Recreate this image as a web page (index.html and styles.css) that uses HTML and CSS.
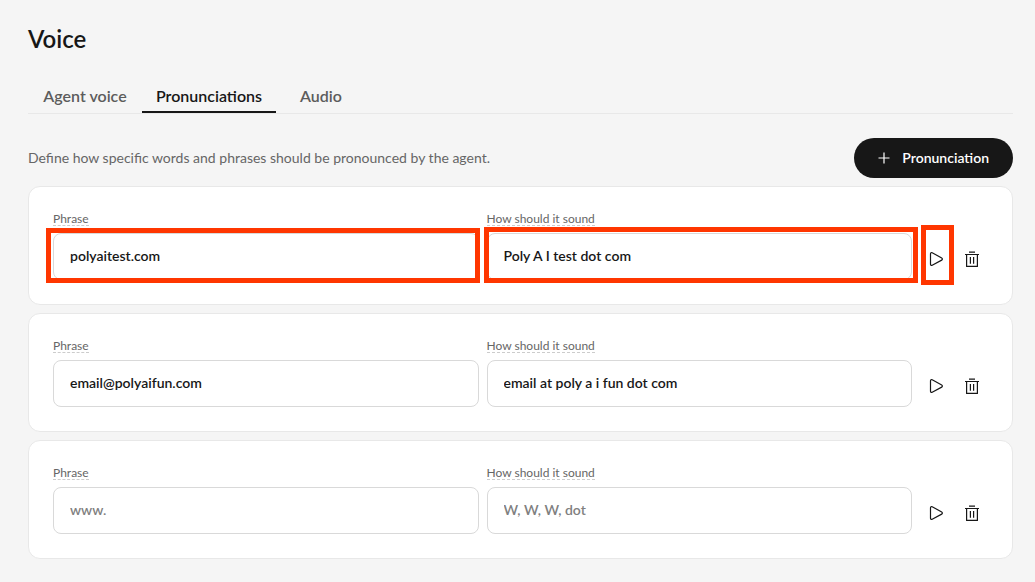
FILE: index.html
```html
<!DOCTYPE html>
<html lang="en">
<head>
<meta charset="utf-8">
<title>Voice</title>
<link rel="stylesheet" href="styles.css">
</head>
<body>
<svg class="sprite" aria-hidden="true">
  <symbol id="play" viewBox="0 0 16 16"><path d="M2.500 2.800v10.400c0 1 .8 1.500 1.700 1.100l9.500-5.200c.9-.5.9-1.600 0-2.100L4.200 1.700c-.9-.4-1.700.1-1.700 1.100z" fill="none" stroke="currentColor" stroke-width="1.200" stroke-linejoin="round"/></symbol>
  <symbol id="trash" viewBox="0 0 16 16"><path d="M1 3.500h14M5 1.100h6M2.600 3.500v11.900h10.800V3.500M6.400 6v6.800M9.600 6v6.800" fill="none" stroke="currentColor" stroke-width="1.200" stroke-linejoin="round"/></symbol>
</svg>
<main class="page">
  <h1 class="title">Voice</h1>
  <nav class="tabs">
    <a class="tab tab-agent" href="#agent">Agent voice</a>
    <a class="tab tab-pronunciations active" href="#pronunciations" aria-current="page">Pronunciations</a>
    <a class="tab tab-audio" href="#audio">Audio</a>
  </nav>
  <div class="intro">
    <p class="description">Define how specific words and phrases should be pronounced by the agent.</p>
    <button class="add" type="button"><svg class="plus" viewBox="0 0 12 12" aria-hidden="true"><path d="M6 .5v11M.5 6h11" stroke="currentColor" stroke-width="1.200"/></svg>Pronunciation</button>
  </div>
  <div class="cards">
    <section class="card">
      <div class="field">
        <label class="label" for="phrase1">Phrase</label>
        <div class="control marked mark-phrase"><input class="input" id="phrase1" type="text" value="polyaitest.com" placeholder="www."></div>
      </div>
      <div class="field">
        <label class="label" for="sound1">How should it sound</label>
        <div class="control marked mark-sound"><input class="input" id="sound1" type="text" value="Poly A I test dot com" placeholder="W, W, W, dot"></div>
      </div>
      <div class="actions">
        <button class="action marked mark-play" type="button" aria-label="Play"><svg class="icon"><use href="#play"/></svg></button>
        <button class="action" type="button" aria-label="Delete"><svg class="icon"><use href="#trash"/></svg></button>
      </div>
    </section>
    <section class="card">
      <div class="field">
        <label class="label" for="phrase2">Phrase</label>
        <div class="control"><input class="input" id="phrase2" type="text" value="email@polyaifun.com" placeholder="www."></div>
      </div>
      <div class="field">
        <label class="label" for="sound2">How should it sound</label>
        <div class="control"><input class="input" id="sound2" type="text" value="email at poly a i fun dot com" placeholder="W, W, W, dot"></div>
      </div>
      <div class="actions">
        <button class="action" type="button" aria-label="Play"><svg class="icon"><use href="#play"/></svg></button>
        <button class="action" type="button" aria-label="Delete"><svg class="icon"><use href="#trash"/></svg></button>
      </div>
    </section>
    <section class="card">
      <div class="field">
        <label class="label" for="phrase3">Phrase</label>
        <div class="control"><input class="input" id="phrase3" type="text" placeholder="www."></div>
      </div>
      <div class="field">
        <label class="label" for="sound3">How should it sound</label>
        <div class="control"><input class="input" id="sound3" type="text" placeholder="W, W, W, dot"></div>
      </div>
      <div class="actions">
        <button class="action" type="button" aria-label="Play"><svg class="icon"><use href="#play"/></svg></button>
        <button class="action" type="button" aria-label="Delete"><svg class="icon"><use href="#trash"/></svg></button>
      </div>
    </section>
  </div>
</main>
</body>
</html>
```
FILE: styles.css
```css
* { box-sizing: border-box; }
body {
  margin: 0;
  background: #f5f5f5;
  color: #171717;
  font-family: Lato, "Open Sans", sans-serif;
  font-size: 14px;
}
input, button { font: inherit; color: inherit; }
.sprite { position: absolute; width: 0; height: 0; }
.page { padding: 24px 22px 23px 28px; }
.title { margin: 0; font-size: 24px; line-height: 30px; font-weight: 600; }
.tabs { display: flex; margin-top: 26px; border-bottom: 1px solid #e8e8e8; }
.tab {
  height: 33px;
  border-bottom: 2px solid transparent;
  color: #5c5c5c;
  font-size: 16px;
  line-height: 32px;
  font-weight: 600;
  text-align: center;
  text-decoration: none;
}
.tab.active { color: #171717; border-color: #171717; }
.tab-agent { min-width: 114px; }
.tab-pronunciations { min-width: 134px; }
.tab-audio { min-width: 90px; }
.intro { display: flex; align-items: center; justify-content: space-between; margin-top: 24px; }
.description { margin: 0; color: #666; line-height: 20px; }
.add {
  display: flex;
  align-items: center;
  gap: 12px;
  height: 40px;
  padding: 0 24px;
  border: 0;
  border-radius: 20px;
  background: #171717;
  color: #fff;
  font-weight: 600;
  line-height: 16px;
}
.plus { width: 12px; height: 12px; }
.cards { display: flex; flex-direction: column; gap: 8px; margin-top: 8px; }
.card {
  display: flex;
  gap: 8px;
  padding: 24px;
  border: 1px solid #e8e8e8;
  border-radius: 12px;
  background: #fff;
}
.field { flex: 1; display: flex; flex-direction: column; align-items: flex-start; gap: 7px; }
.label {
  height: 15px;
  border-bottom: 1px dashed #ccc;
  color: #666;
  font-size: 12px;
  line-height: 16px;
}
.control { width: 100%; }
.input {
  display: block;
  width: 100%;
  height: 47px;
  padding: 0 16px 2px;
  border: 1px solid #d9d9d9;
  border-radius: 8px;
  background: #fff;
  font-weight: 600;
}
.input::placeholder { color: #808080; opacity: 1; }
.actions { display: flex; align-items: flex-end; gap: 4px; }
.action {
  display: flex;
  align-items: center;
  justify-content: center;
  width: 32px;
  height: 42px;
  padding: 0;
  border: 0;
  background: none;
}
.icon { width: 16px; height: 16px; }
.marked { position: relative; }
.marked::after { content: ""; position: absolute; border: 5px solid #ff3600; pointer-events: none; }
.mark-phrase::after { inset: -5px -1px -3px -7px; }
.mark-sound::after { inset: -6px -6px -3px -3px; }
.mark-play::after { inset: -13px -2px -5px 1px; }
```
